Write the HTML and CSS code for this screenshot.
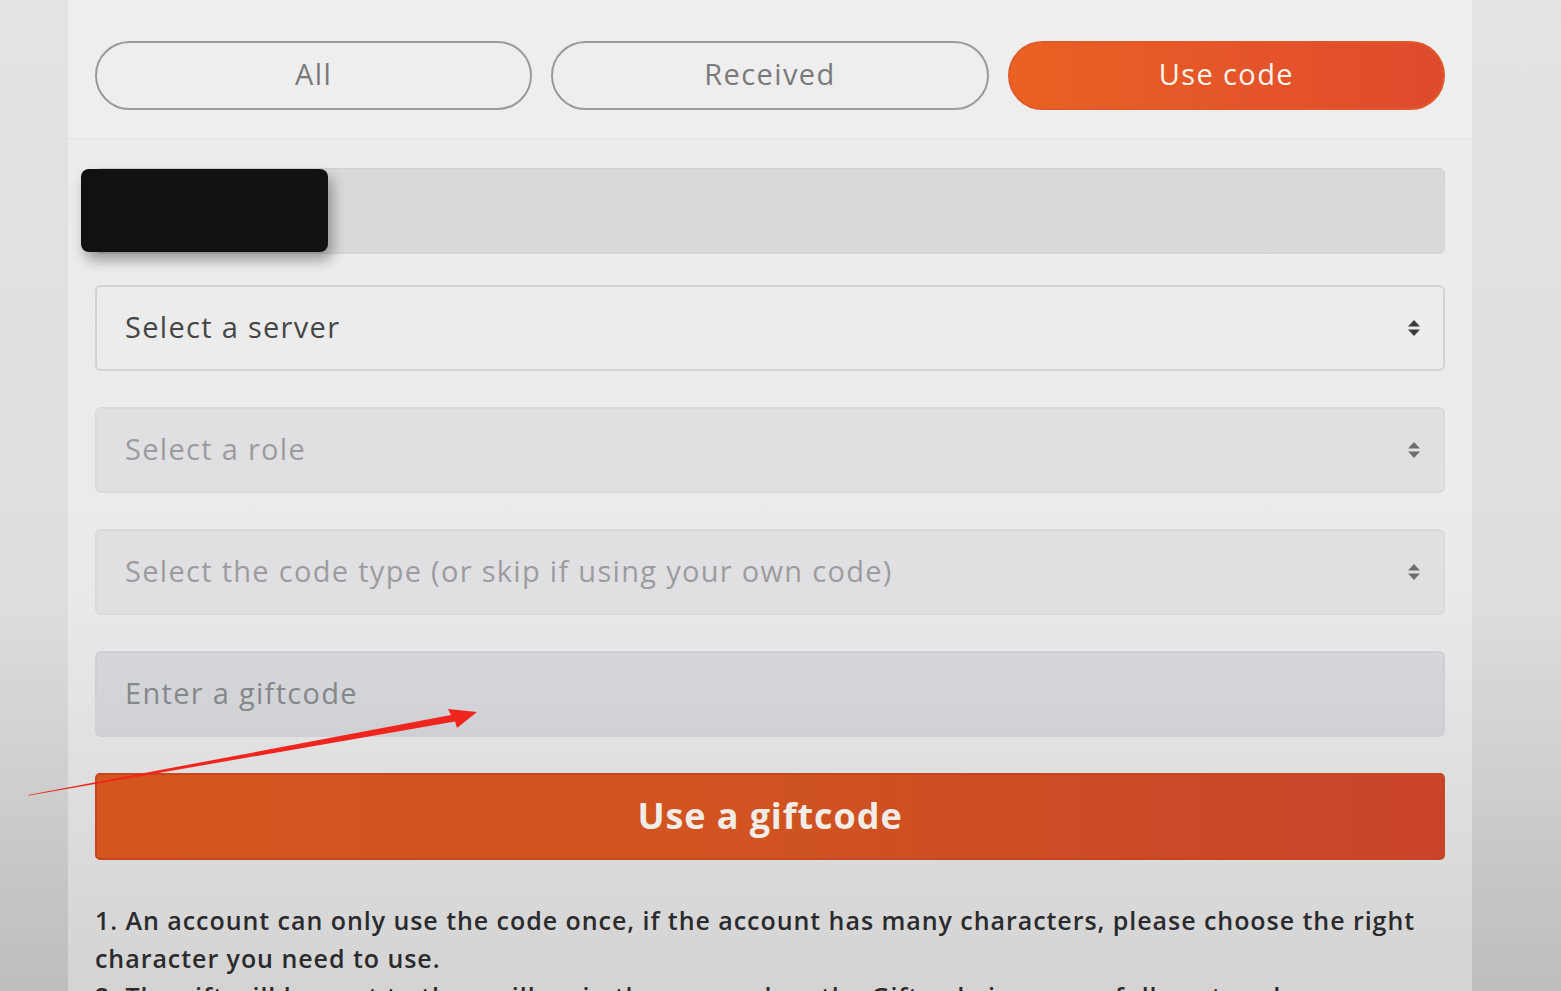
FILE: index.html
```html
<!DOCTYPE html>
<html lang="en">
  <head>
    <meta charset="UTF-8" />
    <meta name="viewport" content="width=device-width, initial-scale=1.0" />
    <title>Giftcode</title>
    <link rel="stylesheet" href="styles.css">
  </head>

  <body>
    <div class="card">
      <div class="tabs">
        <button class="tab">All</button>
        <button class="tab">Received</button>
        <button class="tab active">Use code</button>
      </div>

      <div class="form">
        <div class="account">
          <div class="redact"></div>
        </div>

        <div class="field server">
          <span>Select a server</span>
          <svg class="arrows" width="14" height="20" viewBox="0 0 14 20">
            <path d="M7 2 L13 8.5 H1 Z M7 18 L13 11.5 H1 Z" />
          </svg>
        </div>

        <div class="field muted">
          <span>Select a role</span>
          <svg class="arrows" width="14" height="20" viewBox="0 0 14 20">
            <path d="M7 2 L13 8.5 H1 Z M7 18 L13 11.5 H1 Z" />
          </svg>
        </div>

        <div class="field muted">
          <span>Select the code type (or skip if using your own code)</span>
          <svg class="arrows" width="14" height="20" viewBox="0 0 14 20">
            <path d="M7 2 L13 8.5 H1 Z M7 18 L13 11.5 H1 Z" />
          </svg>
        </div>

        <div class="field giftcode">
          <span>Enter a giftcode</span>
        </div>

        <button class="submit">Use a giftcode</button>

        <div class="notes">
          <p>1. An account can only use the code once, if the account has many characters, please choose the right character you need to use.</p>
          <p>2. The gift will be sent to the mailbox in the game when the Giftcode is successfully entered.</p>
        </div>
      </div>
    </div>

    <!-- red annotation arrow -->
    <svg class="annotation" width="500" height="110" viewBox="0 0 500 110">
      <path d="M28 95 L451 15 L448 9 L477 12 L457 28 L455 21.5 L29 95.5 Z" fill="#f0261e" />
    </svg>
  </body>
</html>
```

FILE: styles.css
```css
body {
  margin: 0;
  height: 991px;
  overflow: hidden;
  background: linear-gradient(#e3e3e3 0%, #dedede 60%, #bdbdbd 100%);
  font-family: "Open Sans", "DejaVu Sans", sans-serif;
  position: relative;
}

.card {
  margin-left: 68px;
  width: 1404px;
  min-height: 991px;
  background: linear-gradient(#ededed 0%, #ebebeb 55%, #d2d2d2 100%);
}

.tabs {
  display: flex;
  gap: 19px;
  padding: 41px 27px 28px 27px;
  border-bottom: 1px solid #e4e4e4;
  background-color: #eeeeee;
}

.tab {
  flex: 1;
  height: 69px;
  padding-bottom: 5px;
  border: 2px solid #9a9a9a;
  border-radius: 35px;
  background-color: transparent;
  color: #7a7a7a;
  font-family: inherit;
  font-size: 29px;
  letter-spacing: 1.4px;
  cursor: pointer;
}

.tab.active {
  border-color: #e0592a;
  background: linear-gradient(90deg, #ea6223, #e4532a 60%, #dd4b2c);
  color: #fff4ec;
}

.form {
  display: flex;
  flex-direction: column;
  gap: 36px;
  padding: 29px 27px 0 27px;
}

.account {
  position: relative;
  height: 86px;
  margin-bottom: -5px;
  border-radius: 6px;
  background-color: #d9d9dc;
  border: 1px solid #d2d2d5;
  box-sizing: border-box;
}

.redact {
  position: absolute;
  left: -15px;
  top: 0;
  width: 247px;
  height: 83px;
  border-radius: 8px;
  background-color: #111111;
  box-shadow: 4px 8px 14px rgba(0, 0, 0, 0.35);
}

.field {
  display: flex;
  align-items: center;
  justify-content: space-between;
  height: 86px;
  box-sizing: border-box;
  padding: 0 22px 4px 28px;
  border: 2px solid #d3d3d3;
  border-radius: 6px;
  background-color: #ececec;
  color: #464646;
  font-size: 29px;
  letter-spacing: 1.3px;
}

.field .arrows {
  margin-top: 4px;
}

.field.muted {
  border-color: #dadadc;
  background-color: #e0e0e2;
  color: #9c9c9e;
}

.field.giftcode {
  border-color: #cfd0d3;
  background: linear-gradient(#d6d7da, #d0d1d4);
  color: #86878a;
}

.arrows {
  fill: #3c3c3c;
}

.muted .arrows {
  fill: #6e6e6e;
}

.submit {
  height: 87px;
  padding-bottom: 4px;
  border: 2px solid #c4481f;
  border-radius: 5px;
  background: linear-gradient(90deg, #d4561e, #d05321 50%, #c8432a);
  color: #f3ece6;
  font-family: inherit;
  font-size: 36px;
  font-weight: 700;
  letter-spacing: 0.9px;
  cursor: pointer;
}

.notes {
  margin-top: 5px;
  color: #2b2b2e;
  font-size: 25px;
  font-weight: 600;
  line-height: 38px;
  letter-spacing: 0.95px;
}

.notes p {
  margin: 0;
}

.annotation {
  position: absolute;
  left: 0;
  top: 700px;
}
```
